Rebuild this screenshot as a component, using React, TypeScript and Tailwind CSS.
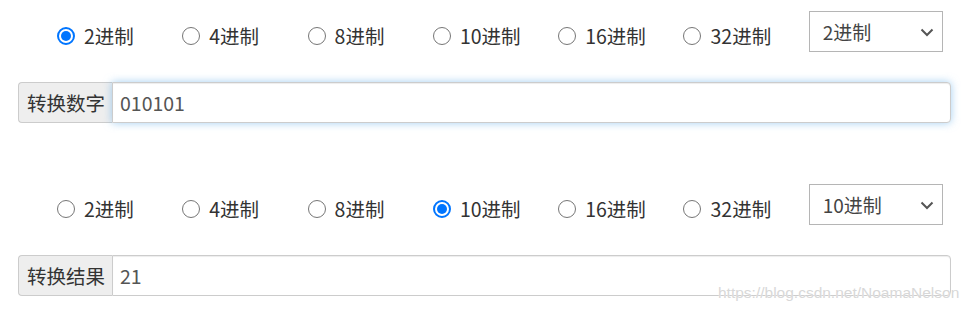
import React from "react";

const bases = ["2进制", "4进制", "8进制", "10进制", "16进制", "32进制"];

function Radio({ checked, label }: { checked: boolean; label: string }) {
  return (
    <label className="flex w-[125.3px] shrink-0 items-center">
      {checked ? (
        <span className="flex h-[18px] w-[18px] items-center justify-center rounded-full border-2 border-[#0075ff] bg-white">
          <span className="h-[10px] w-[10px] rounded-full bg-[#0075ff]" />
        </span>
      ) : (
        <span className="h-[18px] w-[18px] rounded-full border border-[#767676] bg-white" />
      )}
      <span className="ml-[9px] text-[19.5px] leading-[24px] text-[#333]">{label}</span>
    </label>
  );
}

function Select({ value }: { value: string }) {
  return (
    <div className="flex h-[41px] w-[134px] shrink-0 items-center justify-between border border-[#b5b5b5] bg-white pl-[13px] pr-[8px]">
      <span className="text-[19px] leading-[24px] text-[#444]">{value}</span>
      <svg width="14" height="9" viewBox="0 0 14 9" className="mt-[1px]">
        <path d="M1.5 1.5 L7 7 L12.5 1.5" fill="none" stroke="#555" strokeWidth="2" />
      </svg>
    </div>
  );
}

function Block({ checked, sel, addon, value, focus }: { checked: number; sel: string; addon: string; value: string; focus?: boolean }) {
  return (
    <div className="flex flex-col">
      <div className="flex items-start pl-[57px]">
        <div className="mt-[13px] flex">
          {bases.map((b, i) => (
            <Radio key={b} checked={i === checked} label={b} />
          ))}
        </div>
        <Select value={sel} />
      </div>
      <div className="ml-[18px] mt-[30px] flex h-[41px] w-[933px]">
        <div className="flex w-[94px] shrink-0 items-center rounded-l-[4px] border border-r-0 border-[#ccc] bg-[#eee] pl-[8px] text-[19.5px] text-[#333]">
          {addon}
        </div>
        <div
          className={
            "flex flex-1 items-center rounded-r-[4px] border border-[#ccc] bg-white pl-[7px] text-[19.5px] text-[#555] " +
            (focus
              ? "shadow-[inset_0_1px_1px_rgba(0,0,0,0.075),0_0_8px_rgba(102,175,233,0.6)]"
              : "shadow-[inset_0_1px_1px_rgba(0,0,0,0.075)]")
          }
        >
          {value}
        </div>
      </div>
    </div>
  );
}

export default function App() {
  return (
    <div
      className="relative h-[311px] w-[973px] overflow-hidden bg-white pt-[11px]"
      style={{ fontFamily: '"Noto Sans CJK SC", "Noto Sans", sans-serif' }}
    >
      <Block checked={0} sel="2进制" addon="转换数字" value="010101" focus />
      <div className="h-[61px]" />
      <Block checked={3} sel="10进制" addon="转换结果" value="21" />
      <div
        className="absolute left-[718px] top-[283px] text-[15.5px] leading-[20px] text-[#d8d8d8]"
        style={{ fontFamily: '"Liberation Sans", Arial, sans-serif', textShadow: "0 0 1px #fff" }}
      >
        https://blog.csdn.net/NoamaNelson
      </div>
    </div>
  );
}
